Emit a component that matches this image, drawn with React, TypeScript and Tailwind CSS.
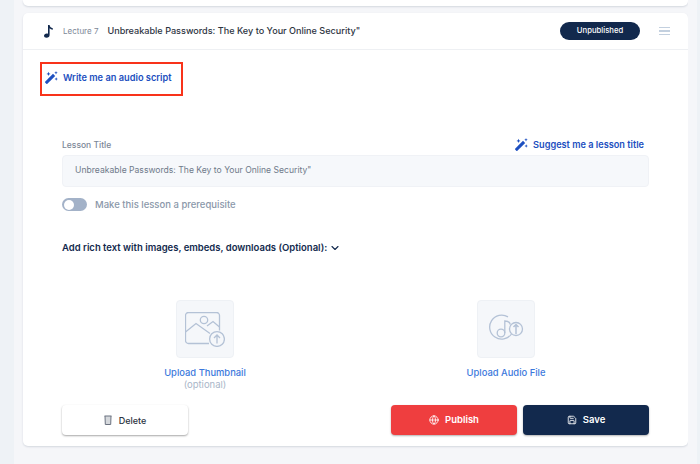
import { ChevronDown, Globe, Save } from 'lucide-react'

function ThumbnailIcon() {
  return (
    <svg width="40" height="35" viewBox="0 0 40 35" fill="none" stroke="#b4c2d6" strokeWidth="1.3">
      <path d="M24 31.500H3.500a3 3 0 0 1-3-3V3.500a3 3 0 0 1 3-3h28a3 3 0 0 1 3 3v15" />
      <path d="M0.500 20L11 11.500 25 21.500M22 14l6-4.500 6.500 5.500" />
      <circle cx="19" cy="8" r="3.700" />
      <circle cx="32" cy="27" r="7.400" />
      <path d="M32 31.500v-8.500M29 26l3-3 3 3" />
    </svg>
  )
}

function AudioIcon() {
  return (
    <svg width="36" height="32" viewBox="0 0 36 32" fill="none" stroke="#b4c2d6" strokeWidth="1.300">
      <path d="M20 3.900A12 12 0 1 0 23.500 21" />
      <circle cx="13" cy="20" r="3.800" />
      <path d="M16.800 20V8c3 0 5 1.200 5.500 3.500" />
      <circle cx="28" cy="16" r="6.500" />
      <path d="M28 21v-9.500M25.500 14l2.500-2.500 2.500 2.500" strokeWidth="1.500" />
    </svg>
  )
}

function Wand() {
  return (
    <svg width="13" height="13" viewBox="0 0 13 13" fill="#1d4fc0">
      <path d="M8 2.800l2.200 2.200-7.800 7.700a.8.8 0 0 1-1.100 0L.3 11.700a.8.8 0 0 1 0-1.100z" />
      <path d="M3.500 .8l.6 1.500 1.500.6-1.500.6-.6 1.500-.6-1.500-1.500-.6 1.500-.6zM11 0l.5 1.200 1.200.5-1.200.5-.5 1.200-.5-1.200-1.200-.5 1.200-.5zM11.200 6.300l.5 1.200 1.200.5-1.200.5-.5 1.200-.5-1.200-1.200-.5 1.200-.5z" />
    </svg>
  )
}

function UploadTile({ label, note, children }: { label: string; note?: string; children: React.ReactNode }) {
  return (
    <div className="flex w-[140px] flex-col items-center">
      <div className="flex h-[58px] w-[58px] items-center justify-center rounded-[4px] border border-[#eef1f5] bg-[#f5f7fa]">
        {children}
      </div>
      <div className="mt-[8px] text-[9.400px] leading-[13px] font-medium text-[#3b78dc]">{label}</div>
      {note && <div className="text-[9.500px] leading-[12px] text-[#a9b6c8]">{note}</div>}
    </div>
  )
}

export default function App() {
  return (
    <div
      className="flex h-[464px] w-[700px] overflow-hidden bg-[#f5f6f9] text-[#12294d]"
      style={{ fontFamily: 'Inter, sans-serif' }}
    >
      <div className="w-[14px] shrink-0 bg-[#eef2f6]" />
      <div className="flex w-[674px] flex-col gap-[7px] pl-[9px]">
        <div className="h-[6px] w-[665px] shrink-0 rounded-b-[5px] bg-white shadow-[0_1px_2px_rgba(30,50,80,0.15)]" />

        {/* Lecture card */}
        <div className="h-[433px] w-[665px] shrink-0 rounded-[5px] bg-white shadow-[0_1px_2px_rgba(30,50,80,0.15)]">
          <div className="flex h-[37px] items-center border-b border-[#eef0f3] pr-[18px] pl-[21px]">
            <svg width="9" height="14" viewBox="0 0 9 14" fill="#12294d">
              <path d="M4 1h1.600c.2 2 1.600 2.800 3.200 3.300v1.500C7.400 5.500 6.300 5 5.600 4.300V11c0 1.700-1.300 2.800-3 2.800C1 13.800 0 13 0 11.800c0-1.300 1.200-2.300 2.700-2.300.5 0 .9.100 1.300.300V1z" />
            </svg>
            <span className="ml-[10px] text-[8px] text-[#7c8797]">Lecture 7</span>
            <span className="ml-[9px] text-[9.100px] font-medium text-[#2d3442]">
              Unbreakable Passwords: The Key to Your Online Security"
            </span>
            <div className="ml-auto flex h-[18px] w-[80px] items-center justify-center rounded-full bg-[#12294d] text-[7.700px] font-medium text-white">
              Unpublished
            </div>
            <div className="ml-[19px] flex w-[11px] flex-col gap-[2px]">
              <div className="h-[1.500px] bg-[#c3d0df]" />
              <div className="h-[1.500px] bg-[#c3d0df]" />
              <div className="h-[1.500px] bg-[#c3d0df]" />
            </div>
          </div>

          <div className="pt-[12px] pl-[17px]">
            <div className="flex h-[34px] w-[143px] items-center gap-[5px] border-2 border-[#f8331a] pb-[3px] pl-[3px]">
              <Wand />
              <span className="text-[9.250px] font-semibold text-[#1d4fc0]">Write me an audio script</span>
            </div>
          </div>

          <div className="px-[39px] pt-[42px]">
            <div className="flex items-center justify-between">
              <span className="text-[8.500px] font-medium text-[#7c8797]">Lesson Title</span>
              <div className="flex items-center gap-[5px] pr-[5px]">
                <Wand />
                <span className="text-[9.200px] font-semibold text-[#1d4fc0]">Suggest me a lesson title</span>
              </div>
            </div>
            <div className="mt-[3px] flex h-[32px] items-center rounded-[4px] border border-[#f0f2f6] bg-[#f6f8fb] pl-[12px] text-[8.600px] text-[#6f7a8a]">
              Unbreakable Passwords: The Key to Your Online Security"
            </div>
            <div className="mt-[11px] flex items-center gap-[8px]">
              <div className="flex h-[13px] w-[25px] items-center rounded-full bg-[#a3b2c8] pl-[2px]">
                <div className="h-[10px] w-[10px] rounded-full bg-white" />
              </div>
              <span className="text-[9.500px] font-medium text-[#8a97a9]">Make this lesson a prerequisite</span>
            </div>
            <div className="mt-[29px] flex items-center gap-[2px]">
              <span className="text-[9.500px] font-semibold text-[#12294d]">
                Add rich text with images, embeds, downloads (Optional):
              </span>
              <ChevronDown size={12} strokeWidth={2.2} />
            </div>

            <div className="mt-[45px] flex pl-[73px]">
              <UploadTile label="Upload Thumbnail" note="(optional)">
                <ThumbnailIcon />
              </UploadTile>
              <div className="ml-[161px]">
                <UploadTile label="Upload Audio File">
                  <AudioIcon />
                </UploadTile>
              </div>
            </div>

            <div className="mt-[14px] flex items-center">
              <button className="flex h-[30px] w-[126px] items-center justify-center gap-[7px] rounded-[4px] bg-white text-[9px] font-medium text-[#2d3442] shadow-[0_1px_2px_rgba(0,0,0,0.35)]">
                <svg width="8" height="10" viewBox="0 0 8 10" fill="#d5d8dc" stroke="#6b7280" strokeWidth="1">
                  <path d="M.5 1h7M1 1l.3 8.500h5.400L7 1" />
                </svg>
                Delete
              </button>
              <button className="ml-auto flex h-[30px] w-[126px] items-center justify-center gap-[6px] rounded-[4px] bg-[#ef3e3f] text-[9.500px] font-semibold text-white shadow-[0_1px_2px_rgba(0,0,0,0.3)]">
                <Globe size={10} />
                Publish
              </button>
              <button className="ml-[6px] flex h-[30px] w-[126px] items-center justify-center gap-[6px] rounded-[4px] bg-[#12294d] text-[9.500px] font-semibold text-white shadow-[0_1px_2px_rgba(0,0,0,0.3)]">
                <Save size={10} />
                Save
              </button>
            </div>
          </div>
        </div>
      </div>
      <div className="w-[9px] shrink-0 bg-[#f5f6f9]" />
      <div className="flex-1 bg-[#eef2f6]" />
    </div>
  )
}
